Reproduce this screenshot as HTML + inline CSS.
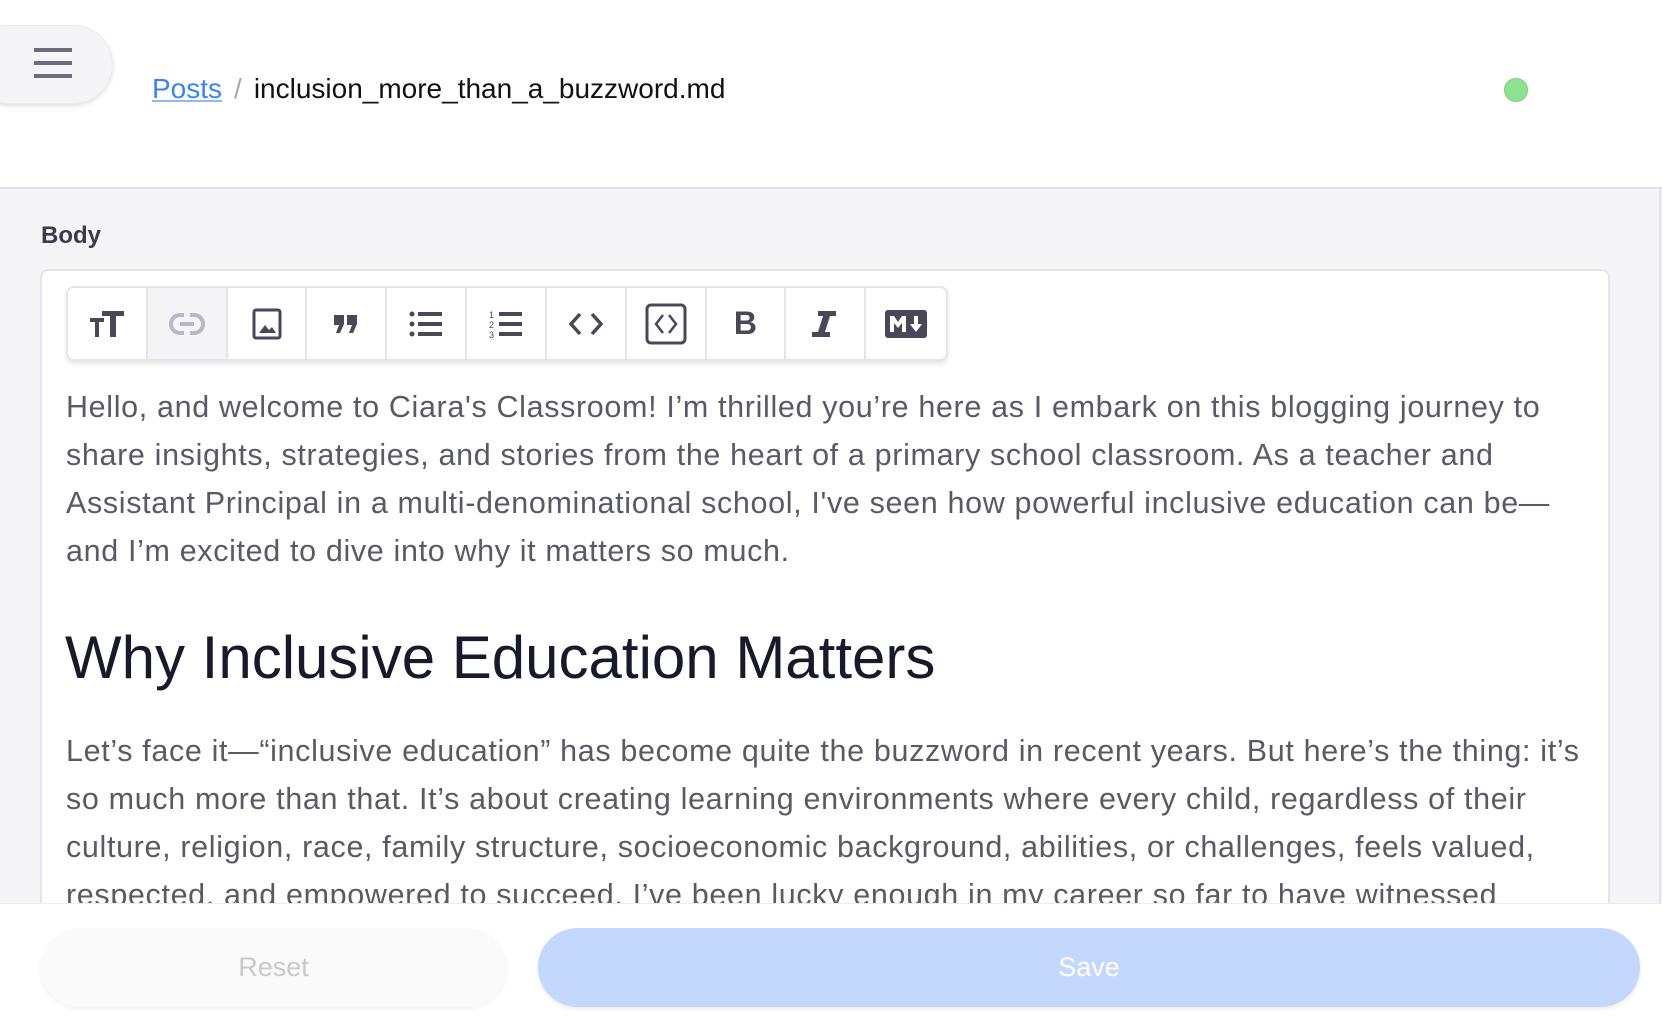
<!DOCTYPE html>
<html><head><meta charset="utf-8"><style>
*{box-sizing:border-box;margin:0;padding:0}
html,body{width:1662px;height:1024px;overflow:hidden;background:#f5f5f7;font-family:"Liberation Sans",Helvetica,Arial,sans-serif}
.header{position:absolute;left:0;top:0;width:1662px;height:189px;background:#fff;border-bottom:2px solid #e2e1ec}
.ham{position:absolute;left:-30px;top:25px;width:143px;height:79px;border-radius:40px;background:#f5f5f8;box-shadow:0 2px 4px rgba(0,0,0,.12);border:1px solid #ebebf0}
.ham i{position:absolute;left:63px;width:38px;height:4px;background:#6e6b7e}
.crumb{position:absolute;left:152px;top:73px;font-size:28px;color:#111;white-space:nowrap}
.crumb a{color:#3b82f6;text-decoration:underline;text-decoration-color:#93b8f5}
.crumb .sep{color:#aaa;margin:0 12px}
.dot{position:absolute;left:1504px;top:78px;width:24px;height:24px;border-radius:50%;background:#8fe08f;border:1px solid #7bd17b}
.rline{position:absolute;left:1659px;top:189px;width:2px;height:720px;background:#e2e1ec}
.label{position:absolute;left:41px;top:222px;font-size:24px;font-weight:bold;color:#3c3a4b}
.editor{position:absolute;left:40px;top:269px;width:1570px;height:700px;background:#fff;border:2px solid #e4e3ee;border-radius:8px}
.tb{position:absolute;left:66px;top:286px;width:882px;height:75px;background:#fff;border:2px solid #e4e3ee;border-radius:8px;box-shadow:0 3px 5px rgba(0,0,0,.1);display:flex;overflow:hidden}
.tb div{width:80px;height:100%;border-right:2px solid #e4e3ee;display:flex;align-items:center;justify-content:center}
.tb div:last-child{border-right:none}
.txt{position:absolute;left:66px;color:#5a5a66;font-size:30.5px;letter-spacing:0.65px;white-space:nowrap;line-height:48px}
h1{position:absolute;left:65px;top:623px;font-size:60px;font-weight:normal;color:#161a2b;white-space:nowrap}
.bottom{position:absolute;left:0;top:903px;width:1662px;height:121px;background:#fff;border-top:1px solid #ececf0}
.reset{position:absolute;left:40px;top:928px;width:467px;height:79px;border-radius:40px;background:#fafafa;box-shadow:0 2px 4px rgba(0,0,0,.05);color:#c9c9cc;font-size:27px;text-align:center;line-height:79px}
.save{position:absolute;left:538px;top:928px;width:1102px;height:79px;border-radius:40px;background:#c4d8fd;box-shadow:0 2px 4px rgba(0,0,0,.08);color:#fff;font-size:27px;text-align:center;line-height:79px}
</style></head><body>
<div class="header">
 <div class="ham"><i style="top:22px"></i><i style="top:35px"></i><i style="top:48px"></i></div>
 <div class="crumb"><a>Posts</a><span class="sep">/</span>inclusion_more_than_a_buzzword.md</div>
 <div class="dot"></div>
</div>
<div class="rline"></div>
<div class="label">Body</div>
<div class="editor"></div>
<div class="tb">
 <div><svg width="36" height="30" viewBox="0 0 36 30"><path d="M1 9h14v4h-5v15H6V13H1zM13 2h22v5h-8v21h-6V7h-8z" fill="#4a4858"/></svg></div>
 <div style="background:#f4f4f7"><svg width="36" height="22" viewBox="0 0 36 22"><rect x="2" y="2" width="32" height="18" rx="9" fill="none" stroke="#b8b7c4" stroke-width="4"/><rect x="11" y="9" width="14" height="4" fill="#b8b7c4"/><rect x="15" y="0" width="6" height="6" fill="#f4f4f7"/><rect x="15" y="16" width="6" height="6" fill="#f4f4f7"/></svg></div>
 <div><svg width="30" height="32" viewBox="0 0 30 32"><rect x="2" y="2" width="26" height="28" rx="2" fill="none" stroke="#4a4858" stroke-width="3"/><path d="M7 25l6-8 4 5 3-3 4 6z" fill="#4a4858"/></svg></div>
 <div><svg width="26" height="20" viewBox="0 0 26 20"><path d="M1 1h10v9l-4 9H3l3-8H1zM14 1h10v9l-4 9h-4l3-8h-5z" fill="#4a4858"/></svg></div>
 <div><svg width="34" height="28" viewBox="0 0 34 28"><g fill="#4a4858"><circle cx="3" cy="4" r="2.5"/><circle cx="3" cy="14" r="2.5"/><circle cx="3" cy="24" r="2.5"/><rect x="9" y="2" width="24" height="4"/><rect x="9" y="12" width="24" height="4"/><rect x="9" y="22" width="24" height="4"/></g></svg></div>
 <div><svg width="34" height="30" viewBox="0 0 34 30"><g fill="#4a4858"><rect x="10" y="3" width="23" height="4"/><rect x="10" y="13" width="23" height="4"/><rect x="10" y="23" width="23" height="4"/></g><text x="0" y="9" font-size="9" font-family="Liberation Sans" fill="#4a4858">1</text><text x="0" y="19" font-size="9" font-family="Liberation Sans" fill="#4a4858">2</text><text x="0" y="29" font-size="9" font-family="Liberation Sans" fill="#4a4858">3</text></svg></div>
 <div><svg width="34" height="24" viewBox="0 0 34 24"><path d="M11 2L2 12l9 10M23 2l9 10-9 10" fill="none" stroke="#4a4858" stroke-width="3.5"/></svg></div>
 <div><svg width="42" height="42" viewBox="0 0 42 42"><rect x="2" y="2" width="38" height="38" rx="4" fill="none" stroke="#4a4858" stroke-width="3"/><path d="M18 12l-7 9 7 9M24 12l7 9-7 9" fill="none" stroke="#4a4858" stroke-width="2.5"/></svg></div>
 <div><span style="font-size:32px;font-weight:bold;color:#4a4858">B</span></div>
 <div><svg width="26" height="30" viewBox="0 0 26 30"><path d="M6 2h18v5h-6l-5 16h5v5H0v-5h6l5-16H6z" fill="#4a4858"/></svg></div>
 <div><svg width="42" height="28" viewBox="0 0 42 28"><rect width="42" height="28" rx="3" fill="#4a4858"/><path d="M5 22V6h4l4 6 4-6h4v16h-4V13l-4 5-4-5v9zM29 6h4v8h4l-6 8-6-8h4z" fill="#fff"/></svg></div>
</div>
<div class="txt" style="top:383px">Hello, and welcome to Ciara's Classroom! I’m thrilled you’re here as I embark on this blogging journey to<br>share insights, strategies, and stories from the heart of a primary school classroom. As a teacher and<br>Assistant Principal in a multi-denominational school, I've seen how powerful inclusive education can be—<br>and I’m excited to dive into why it matters so much.</div>
<h1>Why Inclusive Education Matters</h1>
<div class="txt" style="top:727px">Let’s face it—“inclusive education” has become quite the buzzword in recent years. But here’s the thing: it’s<br>so much more than that. It’s about creating learning environments where every child, regardless of their<br>culture, religion, race, family structure, socioeconomic background, abilities, or challenges, feels valued,<br>respected, and empowered to succeed. I’ve been lucky enough in my career so far to have witnessed</div>
<div class="bottom"></div>
<div class="reset">Reset</div>
<div class="save">Save</div>
</body></html>
